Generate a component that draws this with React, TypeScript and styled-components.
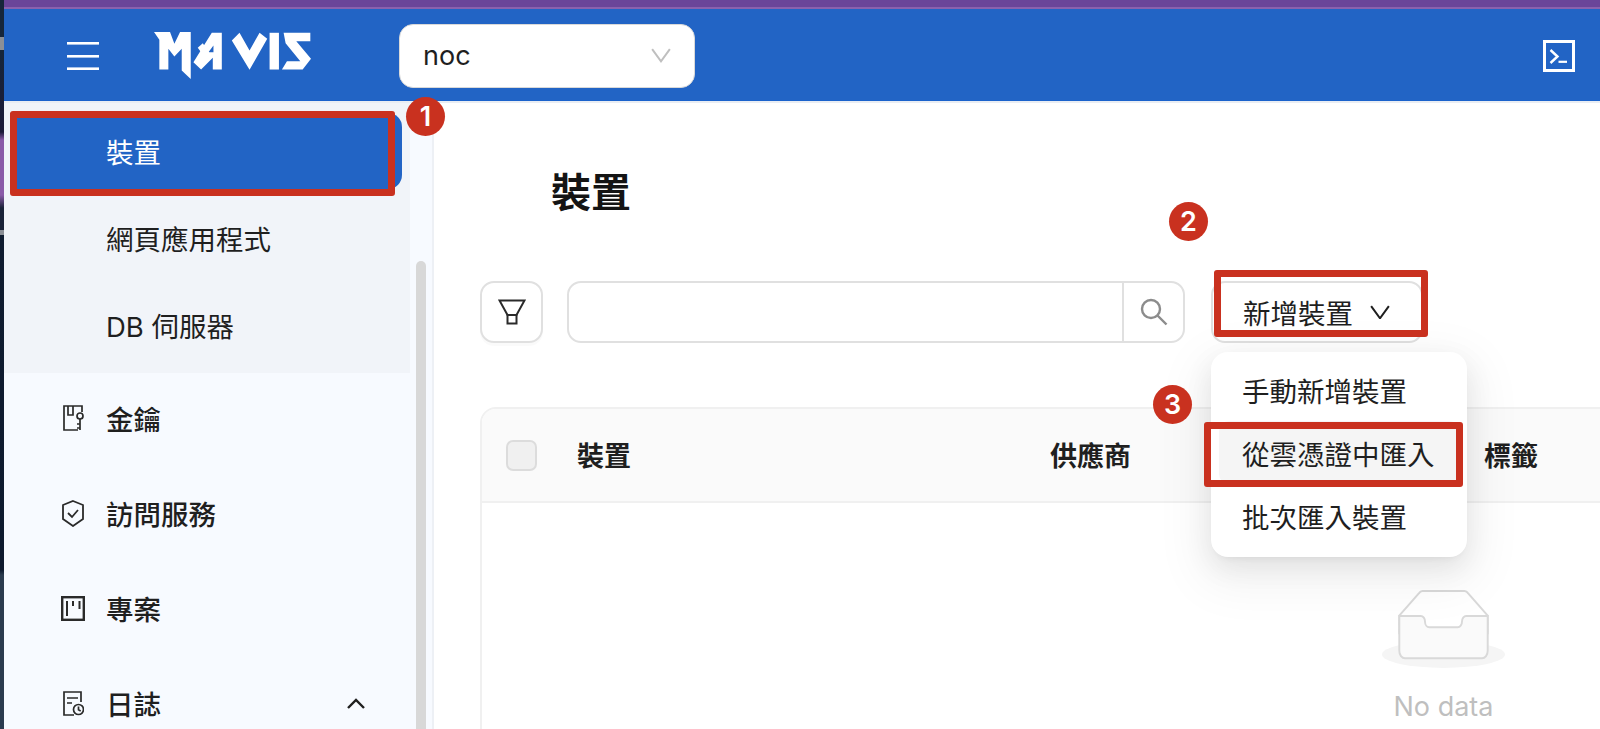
import React from "react";
import styled, { createGlobalStyle } from "styled-components";

const GlobalStyle = createGlobalStyle`
  html, body {
    margin: 0;
    padding: 0;
    background: #fff;
    overflow: hidden;
  }
  * {
    box-sizing: border-box;
  }
  body {
    font-family: Inter, "Noto Sans CJK TC", sans-serif;
    color: #1f1f1f;
  }
`;

const Frame = styled.div`
  display: flex;
  width: 1600px;
  height: 729px;
  overflow: hidden;
`;

const WallpaperStrip = styled.div`
  flex: 0 0 4px;
  background: linear-gradient(
    to bottom,
    #16263a 0,
    #16263a 37px,
    #8b8f96 37px,
    #8b8f96 50px,
    #16263a 50px,
    #1c1a38 132px,
    #8a5aa8 140px,
    #8a5aa8 195px,
    #1a2238 208px,
    #1a2238 230px,
    #8b8f96 230px,
    #8b8f96 235px,
    #101c30 235px,
    #0e1a2e 570px,
    #2b3b4f 575px,
    #2b3b4f 729px
  );
`;

const Screen = styled.div`
  flex: 1;
  min-width: 0;
  display: flex;
  flex-direction: column;
`;

const TopStripe = styled.div`
  flex: 0 0 9px;
  background: #6a4599;
  border-bottom: 2px solid #8a62ad;
`;

const Header = styled.header`
  flex: 0 0 92px;
  display: flex;
  align-items: center;
  padding: 2px 25px 0 63px;
  background: #2264c5;
  border-bottom: 1px solid #1a62cc;
`;

const LogoWrap = styled.div`
  display: flex;
  margin-left: 55px;
  margin-right: 88px;
`;

const ProjectSelect = styled.div`
  width: 296px;
  height: 64px;
  display: flex;
  align-items: center;
  justify-content: space-between;
  padding: 0 23px 0 23px;
  background: #fff;
  border: 1px solid #d9d9d9;
  border-radius: 14px;
  font-size: 27px;
  color: #1f1f1f;
`;

const TerminalButton = styled.div`
  display: flex;
  margin-left: auto;
`;

const HeaderRule = styled.div`
  flex: 0 0 2px;
  background: #e9edf3;
`;

const Body = styled.div`
  flex: 1;
  min-height: 0;
  display: flex;
`;

const Sidebar = styled.aside`
  position: relative;
  z-index: 2;
  flex: 0 0 430px;
  display: flex;
  background: #f7faff;
  border-right: 2px solid #edf0f5;
`;

const Nav = styled.nav`
  flex: 0 0 406px;
  display: flex;
  flex-direction: column;
`;

const SubMenu = styled.div`
  display: flex;
  flex-direction: column;
  gap: 15px;
  padding: 14px 0 10px;
  background: #f1f4f9;
`;

const TopMenu = styled.div`
  display: flex;
  flex-direction: column;
  gap: 23px;
  padding-top: 11px;
`;

const SubItem = styled.div<{ $active?: boolean }>`
  position: relative;
  flex: 0 0 ${(p) => (p.$active ? "76px" : "72px")};
  display: flex;
  align-items: center;
  margin: ${(p) => (p.$active ? "-4px 8px 0 6px" : "0 8px 0 10px")};
  padding-left: ${(p) => (p.$active ? "96px" : "92px")};
  padding-bottom: ${(p) => (p.$active ? "0" : "4px")};
  font-size: 27.5px;
  border-radius: 0 14px 14px 0;
  background: ${(p) => (p.$active ? "#2264c5" : "transparent")};
  color: ${(p) => (p.$active ? "#fff" : "#1f1f1f")};
`;

const TopItem = styled.div`
  flex: 0 0 72px;
  display: flex;
  align-items: center;
  gap: 21px;
  margin: 0 8px 0 10px;
  padding: 0 37px 4px 47px;
  font-size: 27.5px;
  font-weight: 500;
  color: #1f1f1f;
`;

const IconSlot = styled.span`
  display: flex;
  width: 24px;
  justify-content: center;
`;

const ItemArrow = styled.span`
  display: flex;
  margin-left: auto;
`;

const ScrollThumb = styled.div`
  width: 10px;
  height: 500px;
  margin: 158px 0 0 6px;
  border-radius: 5px 5px 0 0;
  background: #d8d8d8;
`;

const Main = styled.main`
  flex: 1;
  min-width: 0;
  padding: 66px 0 0 46px;
  background: #fff;
  overflow: hidden;
`;

const PageTitle = styled.h1`
  margin: 0 0 64px 71px;
  font-size: 40px;
  line-height: 48px;
  font-weight: 700;
  color: #141414;
`;

const Toolbar = styled.div`
  display: flex;
  height: 62px;
  margin-bottom: 64px;
`;

const FilterButton = styled.div`
  flex: 0 0 63px;
  display: flex;
  align-items: center;
  justify-content: center;
  margin-right: 24px;
  background: #fff;
  border: 2px solid #e0e0e0;
  border-radius: 14px;
  box-shadow: 0 3px 0 rgba(0, 0, 0, 0.02);
`;

const SearchBox = styled.div`
  flex: 0 0 618px;
  display: flex;
  margin-right: 26px;
  border: 2px solid #e0e0e0;
  border-radius: 14px;
`;

const SearchField = styled.div`
  flex: 1;
`;

const SearchAction = styled.div`
  flex: 0 0 61px;
  display: flex;
  align-items: center;
  justify-content: center;
  border-left: 2px solid #e0e0e0;
`;

const AddWrap = styled.div`
  position: relative;
  flex: 0 0 212px;
`;

const AddButton = styled.div`
  height: 62px;
  display: flex;
  align-items: center;
  gap: 17px;
  padding-left: 30px;
  font-size: 27.5px;
  color: #1f1f1f;
  background: #fff;
  border: 2px solid #e0e0e0;
  border-radius: 14px;
`;

const Dropdown = styled.div`
  position: absolute;
  z-index: 3;
  top: 71px;
  left: 0;
  width: 256px;
  height: 205px;
  display: flex;
  flex-direction: column;
  padding: 6px 8px 0;
  background: #fff;
  border-radius: 17px;
  box-shadow: 0 10px 28px rgba(0, 0, 0, 0.08), 0 5px 10px -7px rgba(0, 0, 0, 0.12), 0 16px 48px 14px rgba(0, 0, 0, 0.05);
`;

const DropdownItem = styled.div<{ $active?: boolean }>`
  position: relative;
  flex: 0 0 63px;
  display: flex;
  align-items: center;
  padding-left: 23px;
  font-size: 27.5px;
  color: #1f1f1f;
  border-radius: 10px;
  background: ${(p) => (p.$active ? "#f5f5f5" : "transparent")};
`;

const Marker = styled.div<{ $inset: string }>`
  position: absolute;
  z-index: 4;
  inset: ${(p) => p.$inset};
  border: 7px solid #c9311f;
  border-radius: 3px;
  pointer-events: none;
`;

const Badge = styled.div<{ $left: number; $top: number }>`
  position: absolute;
  z-index: 5;
  left: ${(p) => p.$left}px;
  top: ${(p) => p.$top}px;
  width: 39px;
  height: 39px;
  display: flex;
  align-items: center;
  justify-content: center;
  border-radius: 50%;
  background: #c9311f;
  color: #fff;
  font-size: 27px;
  font-weight: 600;
`;

const Table = styled.div`
  width: 1200px;
  min-height: 420px;
  border: 2px solid #f0f0f0;
  border-radius: 16px 0 0 0;
`;

const TableHead = styled.div`
  height: 94px;
  display: grid;
  grid-template-columns: 95px 473px 434px 1fr;
  align-items: center;
  background: #fafafa;
  border-bottom: 2px solid #f0f0f0;
  border-radius: 14px 0 0 0;
  font-size: 27px;
  font-weight: 700;
  color: #1f1f1f;
`;

const HeadCell = styled.div`
  padding-bottom: 2px;
`;

const CheckCell = styled.div`
  padding-left: 24px;
`;

const Checkbox = styled.div`
  width: 31px;
  height: 31px;
  background: #f0f0f0;
  border: 2px solid #dcdcdc;
  border-radius: 7px;
`;

const EmptyState = styled.div`
  display: flex;
  flex-direction: column;
  align-items: center;
  width: 123px;
  margin: 86px 0 0 900px;
`;

const EmptyText = styled.div`
  margin-top: 24px;
  font-size: 27px;
  line-height: 30px;
  white-space: nowrap;
  color: #bfbfbf;
`;

const Hamburger = () => (
  <svg width="32" height="28" viewBox="0 0 32 28" fill="#fff">
    <rect x="0" y="0" width="32" height="2.6" />
    <rect x="0" y="13" width="32" height="2.6" />
    <rect x="0" y="25.4" width="32" height="2.6" />
  </svg>
);

const Logo = () => (
  <svg width="157" height="47" viewBox="72 45 470 140" fill="#fff">
    <polygon points="72,45 120,45 133,80 150,45 182,45 182,185 155,160 155,95 133,118 115,95 115,157 88,157 88,68" />
    <path fillRule="evenodd" d="M245 47H275V157H248V122L213 157 190 135zM250 85V105H235z" />
    <polygon points="203,92 218,78 240,110 225,122" />
    <polygon points="305,70 328,47 358,100 388,47 411,65 358,158" />
    <rect x="418" y="47" width="28" height="110" />
    <polygon points="460,47 540,47 540,72 498,72 542,125 517,157 455,157 470,132 510,132 466,78" />
  </svg>
);

const ChevronDown = ({ size, color }: { size: number; color: string }) => (
  <svg width={size} height={size * 0.72} viewBox="0 0 18 13" fill="none" stroke={color} strokeWidth="1.8">
    <path d="M1 1l8 11 8-11" />
  </svg>
);

const TerminalIcon = () => (
  <svg width="32" height="32" viewBox="0 0 32 32" fill="none" stroke="#fff">
    <rect x="1.5" y="1.5" width="29" height="29" strokeWidth="3" />
    <path d="M7.5 10l7 6.5-7 6.5" strokeWidth="2.4" />
    <path d="M15.5 21.8h8.5" strokeWidth="2.2" />
  </svg>
);

const KeyIcon = () => (
  <svg width="22" height="26" viewBox="0 0 22 26" fill="none" stroke="#2a2a2a" strokeWidth="1.7">
    <path d="M20 7V1H2v24h14" />
    <path d="M6 1v9h5V1" />
    <circle cx="18" cy="11" r="3" />
    <path d="M18 14v11M18 19h-3M18 23h-3" />
  </svg>
);

const ShieldIcon = () => (
  <svg width="24" height="27" viewBox="0 0 24 27" fill="none" stroke="#2a2a2a" strokeWidth="1.8">
    <path d="M12 1l10 4v14l-10 7-10-7V5z" />
    <path d="M7 13l4 4 6-7" />
  </svg>
);

const BoardIcon = () => (
  <svg width="24" height="25" viewBox="0 0 24 25" fill="none" stroke="#2a2a2a">
    <rect x="1.2" y="1.2" width="21.6" height="22.6" strokeWidth="2.4" />
    <path d="M6 5v15M12 5v5M18.5 5v8" strokeWidth="2" />
  </svg>
);

const LogIcon = () => (
  <svg width="22" height="25" viewBox="0 0 22 25" fill="none" stroke="#2a2a2a" strokeWidth="1.7">
    <path d="M19 11V1H2v23h10" />
    <path d="M5 7h11M5 12h5" />
    <circle cx="16.5" cy="18.5" r="5" />
    <path d="M16.5 15.5v3.2l2.2 1.2" />
  </svg>
);

const ChevronUp = () => (
  <svg width="18" height="11" viewBox="0 0 18 11" fill="none" stroke="#1f1f1f" strokeWidth="2.4">
    <path d="M1 10l8-8 8 8" />
  </svg>
);

const FunnelIcon = () => (
  <svg width="28" height="26" viewBox="0 0 28 26" fill="none" stroke="#2a2a2a" strokeWidth="2">
    <path d="M1.5 1.5h25L18.5 16h-9z" />
    <rect x="9.5" y="16" width="9" height="8.5" />
  </svg>
);

const SearchIcon = () => (
  <svg width="28" height="28" viewBox="0 0 28 28" fill="none" stroke="#8c8c8c" strokeWidth="2.4">
    <circle cx="11" cy="11" r="9" />
    <path d="M17.5 17.5l9 9" />
  </svg>
);

const EmptyIcon = () => (
  <svg width="123" height="79" viewBox="0 0 64 41">
    <g transform="translate(0 1)" fill="none" fillRule="evenodd">
      <ellipse fill="#f5f5f5" cx="32" cy="33" rx="32" ry="7" />
      <g fillRule="nonzero" stroke="#d9d9d9">
        <path d="M55 12.76L44.854 1.258C44.367.474 43.656 0 42.907 0H21.093c-.749 0-1.46.474-1.947 1.257L9 12.761V22h46v-9.24z" />
        <path
          d="M41.613 15.931c0-1.605.994-2.93 2.227-2.931H55v18.137C55 33.26 53.68 35 52.05 35h-40.1C10.32 35 9 33.259 9 31.137V13h11.16c1.233 0 2.227 1.323 2.227 2.928v.022c0 1.605 1.005 2.901 2.237 2.901h14.752c1.232 0 2.237-1.308 2.237-2.913v-.007z"
          fill="#fafafa"
        />
      </g>
    </g>
  </svg>
);

const App = () => (
  <Frame>
    <GlobalStyle />
    <WallpaperStrip />
    <Screen>
      <TopStripe />
      <Header>
        <Hamburger />
        <LogoWrap>
          <Logo />
        </LogoWrap>
        <ProjectSelect>
          noc
          <ChevronDown size={20} color="#bfbfbf" />
        </ProjectSelect>
        <TerminalButton>
          <TerminalIcon />
        </TerminalButton>
      </Header>
      <HeaderRule />
      <Body>
        <Sidebar>
          <Nav>
            <SubMenu>
              <SubItem $active>
                裝置
                <Marker $inset="-2px 7px -7px 0" />
                <Badge $left={396} $top={-16}>1</Badge>
              </SubItem>
              <SubItem>網頁應用程式</SubItem>
              <SubItem>DB 伺服器</SubItem>
            </SubMenu>
            <TopMenu>
              <TopItem>
                <IconSlot><KeyIcon /></IconSlot>
                金鑰
              </TopItem>
              <TopItem>
                <IconSlot><ShieldIcon /></IconSlot>
                訪問服務
              </TopItem>
              <TopItem>
                <IconSlot><BoardIcon /></IconSlot>
                專案
              </TopItem>
              <TopItem>
                <IconSlot><LogIcon /></IconSlot>
                日誌
                <ItemArrow><ChevronUp /></ItemArrow>
              </TopItem>
            </TopMenu>
          </Nav>
          <ScrollThumb />
        </Sidebar>
        <Main>
          <PageTitle>裝置</PageTitle>
          <Toolbar>
            <FilterButton>
              <FunnelIcon />
            </FilterButton>
            <SearchBox>
              <SearchField />
              <SearchAction>
                <SearchIcon />
              </SearchAction>
            </SearchBox>
            <AddWrap>
              <AddButton>
                新增裝置
                <ChevronDown size={20} color="#1f1f1f" />
              </AddButton>
              <Marker $inset="-11px -5px 6px 3px" />
              <Badge $left={-42} $top={-79}>2</Badge>
              <Dropdown>
                <DropdownItem>手動新增裝置</DropdownItem>
                <DropdownItem $active>
                  從雲憑證中匯入
                  <Marker $inset="1px -4px -3px -15px" />
                </DropdownItem>
                <DropdownItem>批次匯入裝置</DropdownItem>
                <Badge $left={-58} $top={33}>3</Badge>
              </Dropdown>
            </AddWrap>
          </Toolbar>
          <Table>
            <TableHead>
              <CheckCell>
                <Checkbox />
              </CheckCell>
              <HeadCell>裝置</HeadCell>
              <HeadCell>供應商</HeadCell>
              <HeadCell>標籤</HeadCell>
            </TableHead>
            <EmptyState>
              <EmptyIcon />
              <EmptyText>No data</EmptyText>
            </EmptyState>
          </Table>
        </Main>
      </Body>
    </Screen>
  </Frame>
);

export default App;
